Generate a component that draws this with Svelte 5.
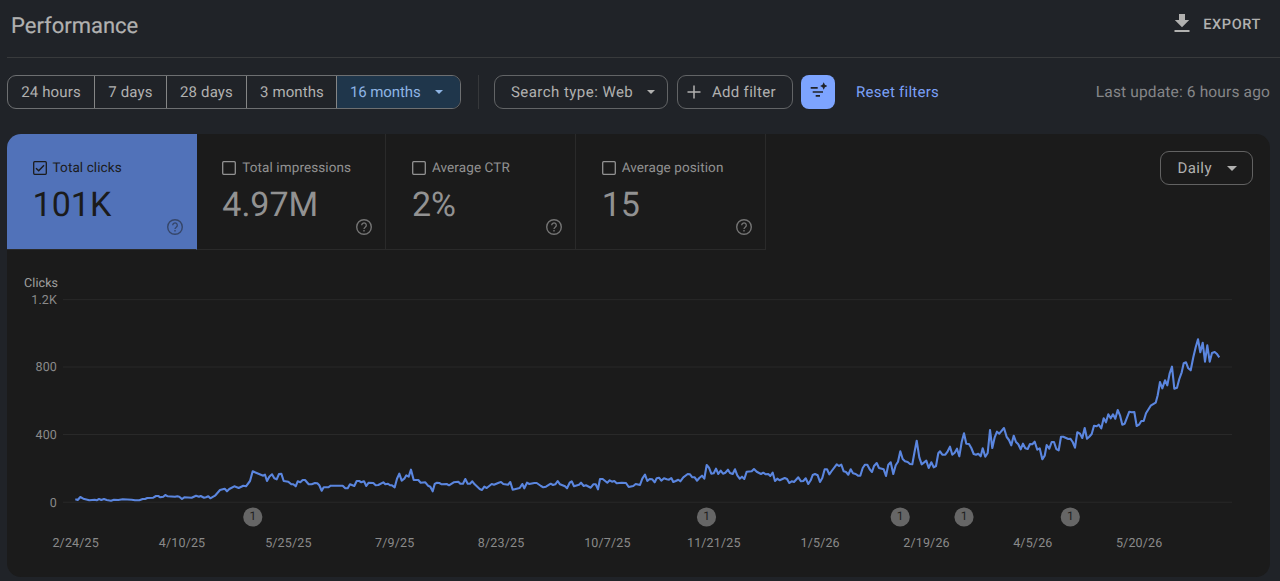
<script>
  let ranges = ["24 hours", "7 days", "28 days", "3 months", "16 months"];
  let selectedRange = "16 months";

  let metrics = [
    { label: "Total clicks", value: "101K", checked: true },
    { label: "Total impressions", value: "4.97M", checked: false },
    { label: "Average CTR", value: "2%", checked: false },
    { label: "Average position", value: "15", checked: false },
  ];

  const yTicks = [
    { y: 49.7, label: "1.2K" },
    { y: 117, label: "800" },
    { y: 184.5, label: "400" },
    { y: 252.2, label: "0" },
  ];

  const dates = [
    "2/24/25",
    "4/10/25",
    "5/25/25",
    "7/9/25",
    "8/23/25",
    "10/7/25",
    "11/21/25",
    "1/5/26",
    "2/19/26",
    "4/5/26",
    "5/20/26",
  ];

  const notes = [245.8, 699.5, 893.2, 957, 1063.3];

  // samples are kept at three times the chart scale, relative to each segment's origin
  const segments = [
    {
      left: -7,
      top: 190,
      samples:
        "226,178 233,180 241,171 250,176 262,179 268,181 284,179 290,181 297,177 304,180 312,177 320,180 333,182 342,179 355,180 368,178 395,179 405,181 418,181 428,177 435,177 442,174 460,173 468,168 475,168 481,172 490,170 496,165 503,169 525,170 532,169 538,170 546,177 553,172 575,173 588,167 597,170 602,168 612,173 618,172 625,169 631,175 645,167 660,150 674,146 681,154 688,147 703,139 716,144 730,137 738,139 750,123 758,94 768,98 790,107 795,104 801,123 808,110 816,103 823,115 830,118 837,102 844,101 851,123 865,125 874,133 880,133 887,139 893,124 901,127 908,120 915,120 926,133 935,133 945,129 952,130 958,136",
    },
    {
      left: 313,
      top: 200,
      samples:
        "5,122 11,112 25,112 32,107 68,107 76,115 83,115 90,103 103,108 110,93 118,93 124,97 132,94 139,108 146,98 160,99 167,106 175,105 190,97 196,103 204,101 210,106 216,106 224,112 231,86 238,71 245,92 253,86 259,76 266,80 273,59 281,90 295,90 302,98 316,97 324,107 331,110 338,124 344,102 351,98 358,99 365,103 380,102 387,106 401,97 415,95 421,101 429,101 436,87 443,101 450,101 457,94 464,103 479,117 486,120 493,110 500,114 515,102 522,104 536,98 543,96 550,102 564,104 571,96 578,119 599,114 607,102 613,115 621,98 628,102 643,99 650,99 663,108 670,112 678,110 692,101 699,105 706,103 713,93 720,103 735,109 741,115 749,98 755,94 762,109 777,104 783,98 791,108 798,106 812,113 820,103 827,103 834,118 840,87 848,87 862,98 869,91 876,95 883,93 890,100 905,98 918,99 926,111 940,108 947,102",
    },
    {
      left: 633,
      top: 190,
      samples:
        "0,135 7,116 15,104 22,123 29,117 37,118 44,127 50,115 57,113 64,122 72,115 80,118 87,119 94,114 100,126 107,123 115,119 121,124 130,112 143,102 150,103 157,112 164,112 171,122 178,114 186,107 193,116 200,75 207,83 214,101 221,100 228,86 235,102 242,92 249,101 256,98 264,89 270,99 278,102 285,88 292,106 299,116 306,110 313,117 320,95 335,94 342,87 350,95 363,102 370,98 377,103 385,102 391,108 398,98 405,123 412,116 419,121 434,114 441,117 448,129 455,124 462,126 475,112 483,124 490,123 497,115 505,132 512,121 518,105 525,102 533,106 540,126 547,114 554,88 561,88 568,103 575,93 590,73 597,78 604,74 611,94 618,96 625,104 632,88 639,100 647,102 654,107 661,107 668,84 675,74 682,74 689,88 696,96 702,78 710,69 717,84 731,88 738,108 745,74 752,67 760,102 767,76 774,65 781,34 788,57 795,64 803,66 810,72 817,73 823,40 830,2 838,52 845,73 859,62 866,84 874,67 881,82 888,78 895,40",
    },
    {
      left: 853,
      top: 160,
      samples:
        "240,124 247,134 256,134 263,124 270,110 277,134 284,128 291,116 298,139 305,96 312,70 319,101 327,102 334,114 341,132 348,134 355,131 362,139 368,115 376,140 383,129 390,60 397,114 404,82 411,65 418,71 432,54 440,81 447,90 454,106 461,77 468,96 475,103 482,118 489,101 496,115 503,117 510,102 517,103 524,95 532,119 539,115 547,148 554,137 560,105 568,116 575,96 582,96 589,117 596,121 603,80 610,80 625,87 631,86 638,96 645,113 652,67 660,71 667,84 674,54 681,86 688,80 695,72 702,47 710,49",
    },
    {
      left: 1053,
      top: 70,
      samples:
        "116,314 124,325 131,295 138,307 145,283 152,295 159,283 166,296 173,270 180,286 187,314 194,311 208,275 215,277 223,276 230,318 237,314 244,303 251,303 258,280 272,257 287,248 293,226 300,186 307,205 315,181 322,196 329,160 336,140 343,206 351,203 358,177 365,157 371,130 378,127 385,145 392,151 400,112 407,82 414,58 421,97 428,68 435,125 442,76 449,125 456,99 464,96 470,101 478,112",
    },
  ];

  const linePoints = segments
    .map(({ left, top, samples }) =>
      samples
        .split(" ")
        .map((pair) => {
          const [x, y] = pair.split(",").map(Number);
          return `${(left + x / 3).toFixed(1)},${(top + y / 3).toFixed(1)}`;
        })
        .join(" ")
    )
    .join(" ");

  function selectRange(range) {
    selectedRange = range;
  }

  function toggleMetric(index) {
    metrics[index].checked = !metrics[index].checked;
  }
</script>

<main>
  <header>
    <h1>Performance</h1>
    <button class="export">
      <svg width="16" height="19" viewBox="0 0 16 19">
        <path d="M5 0h6v6h4.2L8 13.2.8 6H5zM.5 16h15v2H.5z" fill="currentColor" />
      </svg>
      EXPORT
    </button>
  </header>

  <div class="toolbar">
    <div class="ranges">
      {#each ranges as range}
        <button
          class="range"
          class:selected={selectedRange === range}
          on:click={() => selectRange(range)}
        >
          {range}
          {#if range === "16 months"}
            <span class="caret"></span>
          {/if}
        </button>
      {/each}
    </div>
    <div class="divider"></div>
    <button class="chip search">Search type: Web <span class="caret"></span></button>
    <button class="chip add">
      <svg width="14" height="14" viewBox="0 0 14 14">
        <path d="M7 .5v13M.5 7h13" stroke="currentColor" stroke-width="1.5" />
      </svg>
      Add filter
    </button>
    <button class="smart" aria-label="Smart filter">
      <svg width="18" height="20" viewBox="0 0 18 20">
        <path
          d="M1.7 5.8h7M3.7 10h10.3M6.7 13.8h4.3"
          stroke="currentColor"
          stroke-width="1.7"
        />
        <path
          d="M14.7.3 15.9 2.8 18.3 4 15.9 5.2 14.7 7.7 13.5 5.2 11.1 4 13.5 2.8z"
          fill="currentColor"
        />
      </svg>
    </button>
    <button class="reset">Reset filters</button>
    <span class="updated">Last update: 6 hours ago</span>
  </div>

  <section class="card">
    <div class="card-top">
      <div class="metrics">
        {#each metrics as metric, index}
          <button
            class="metric"
            class:active={metric.checked}
            on:click={() => toggleMetric(index)}
          >
            <span class="metric-label">
              <svg width="14" height="14" viewBox="0 0 14 14" fill="none">
                <rect
                  x=".7"
                  y=".7"
                  width="12.6"
                  height="12.6"
                  rx="1"
                  stroke="currentColor"
                  stroke-width="1.3"
                />
                {#if metric.checked}
                  <path
                    d="M3 7.2 5.7 9.8 11 4.2"
                    stroke="currentColor"
                    stroke-width="1.4"
                  />
                {/if}
              </svg>
              {metric.label}
            </span>
            <span class="metric-value">{metric.value}</span>
            <svg class="help" width="16" height="16" viewBox="0 0 16 16" fill="none">
              <circle cx="8" cy="8" r="7.3" stroke="currentColor" stroke-width="1.4" />
              <path
                d="M5.7 6.3a2.3 2.3 0 1 1 3.7 1.8C8.5 8.8 8 9.1 8 10.1"
                stroke="currentColor"
                stroke-width="1.3"
              />
              <path d="M7.3 11.1h1.4v1.4H7.3z" fill="currentColor" />
            </svg>
          </button>
        {/each}
      </div>
      <button class="chip daily">Daily <span class="caret"></span></button>
    </div>

    <svg class="chart" width="1263" height="327" viewBox="0 0 1263 327">
      <text class="title" x="17" y="36.6">Clicks</text>
      {#each yTicks as tick}
        <line class="grid" x1="56" x2="1225" y1={tick.y} y2={tick.y} />
        <text class="tick" x="50" y={tick.y + 4.4} text-anchor="end">{tick.label}</text>
      {/each}
      <polyline class="series" points={linePoints} />
      {#each notes as x}
        <circle class="note" cx={x} cy="267" r="9.6" />
        <text class="note-text" {x} y="270.3" text-anchor="middle">1</text>
      {/each}
      {#each dates as date, index}
        <text class="tick" x={68.7 + index * 106.35} y="297" text-anchor="middle"
          >{date}</text
        >
      {/each}
    </svg>
  </section>
</main>

<style>
  :global(body) {
    background-color: #202328;
  }

  main {
    height: 581px;
    box-sizing: border-box;
    padding-left: 7px;
    overflow: hidden;
    background-color: #202328;
    color: #b1b1b0;
    font-family: Roboto, sans-serif;
    text-rendering: geometricPrecision;
  }

  button {
    display: flex;
    align-items: center;
    box-sizing: border-box;
    margin: 0;
    padding: 0;
    border: none;
    background: none;
    color: inherit;
    font-family: inherit;
    text-rendering: inherit;
    white-space: nowrap;
    cursor: pointer;
  }

  header {
    display: flex;
    justify-content: space-between;
    height: 58px;
    box-sizing: border-box;
    padding: 0 19px 0 4px;
    border-bottom: 1px solid #383a3c;
  }

  h1 {
    margin: 0;
    font-size: 22px;
    font-weight: 400;
    line-height: 54px;
    -webkit-text-stroke: 0.2px currentColor;
  }

  .export {
    height: 48px;
    gap: 13px;
    font-size: 14.5px;
    font-weight: 500;
    letter-spacing: 0.6px;
  }

  .export svg {
    margin-bottom: 1px;
  }

  .toolbar {
    display: flex;
    align-items: center;
    height: 34px;
    margin: 17px 10px 25px 0;
    font-size: 15px;
  }

  .ranges {
    display: flex;
    height: 34px;
    box-sizing: border-box;
    border: 1px solid #6d6f71;
    border-radius: 9px;
    overflow: hidden;
  }

  .range {
    justify-content: center;
    border-left: 1px solid #858686;
    font-size: 15px;
    letter-spacing: 0.15px;
    width: 80px;
  }

  .range:nth-child(1) {
    width: 86px;
    border-left: none;
  }

  .range:nth-child(2) {
    width: 72px;
  }

  .range:nth-child(4) {
    width: 90px;
    padding-left: 1px;
    letter-spacing: 0.1px;
  }

  .range:nth-child(5) {
    justify-content: flex-start;
    width: 124px;
    padding-left: 13px;
    gap: 14px;
    letter-spacing: -0.1px;
  }

  .range.selected {
    background-color: #1f364b;
    color: #8eb4e4;
  }

  .caret {
    border: 4px solid transparent;
    border-top: 4.5px solid currentColor;
    border-bottom: none;
  }

  .divider {
    width: 1px;
    height: 34px;
    margin: 0 15px 0 17px;
    background-color: #36383b;
  }

  .chip {
    height: 34px;
    border: 1px solid #626466;
    border-radius: 9px;
    font-size: 15px;
    letter-spacing: 0.3px;
  }

  .search {
    justify-content: space-between;
    width: 174px;
    padding: 0 12px 0 16px;
    letter-spacing: 0.45px;
  }

  .add {
    width: 116px;
    margin-left: 9px;
    padding-left: 9px;
    gap: 11px;
  }

  .smart {
    justify-content: center;
    width: 34px;
    height: 34px;
    margin-left: 8px;
    border-radius: 8px;
    background-color: #7da4ff;
    color: #202328;
  }

  .reset {
    margin-left: 21px;
    color: #7ba0f8;
    font-size: 15px;
    letter-spacing: 0.25px;
  }

  .updated {
    margin-left: auto;
    color: #858688;
    font-size: 15.5px;
    letter-spacing: 0.15px;
  }

  .card {
    width: 1263px;
    height: 443px;
    border-radius: 14px;
    overflow: hidden;
    background-color: #1b1b1b;
  }

  .card-top {
    display: flex;
    justify-content: space-between;
    align-items: flex-start;
    height: 116px;
  }

  .metrics {
    display: flex;
  }

  .metric {
    position: relative;
    flex-direction: column;
    align-items: flex-start;
    width: 189.7px;
    height: 116px;
    padding: 25px 0 0 25.6px;
    border-right: 1px solid #2a2a2a;
    border-bottom: 1px solid #2a2a2a;
    color: #929292;
  }

  .metric.active {
    background-color: #5172b9;
    background-clip: padding-box;
    border-right-color: #5172b9;
    color: #1b1b1b;
  }

  .metric-label {
    display: flex;
    align-items: center;
    gap: 6px;
    height: 17px;
    font-size: 13.5px;
    letter-spacing: 0.1px;
  }

  .metric-value {
    margin-top: 8px;
    font-size: 34px;
    line-height: 42px;
  }

  .help {
    position: absolute;
    right: 13px;
    bottom: 14px;
    opacity: 0.75;
  }

  .active .help {
    opacity: 0.5;
  }

  .daily {
    width: 93px;
    margin: 17px 17px 0 0;
    padding-left: 16.5px;
    gap: 15px;
    border-color: #626262;
    letter-spacing: 0.4px;
  }

  .daily .caret {
    border-width: 5px 5px 0;
  }

  .chart {
    display: block;
  }

  .grid {
    stroke: #292929;
    stroke-width: 1;
  }

  .series {
    fill: none;
    stroke: #5b86df;
    stroke-width: 2.1;
    stroke-linejoin: round;
  }

  .title {
    fill: #a0a0a0;
    font-size: 12.5px;
    letter-spacing: 0.1px;
  }

  .tick {
    fill: #8a8a8a;
    font-size: 12.5px;
    letter-spacing: 0.15px;
  }

  .note {
    fill: #666;
  }

  .note-text {
    fill: #202020;
    font-size: 12px;
  }
</style>
